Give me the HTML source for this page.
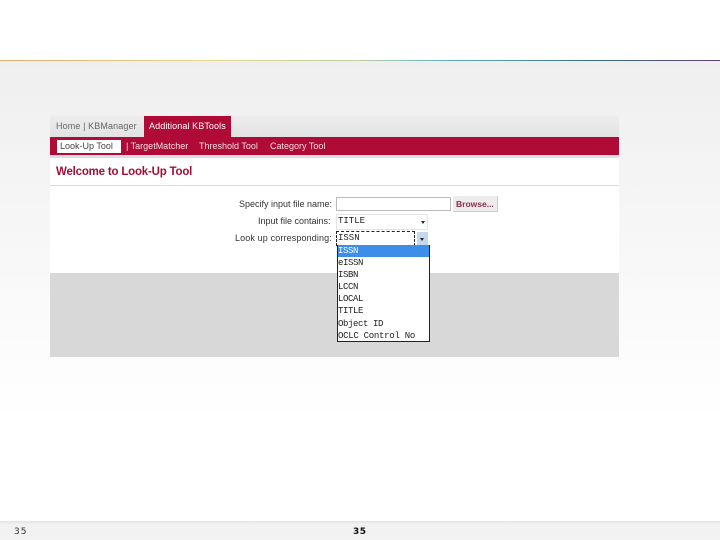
<!DOCTYPE html>
<html><head><meta charset="utf-8"><style>
html,body{margin:0;padding:0}
body{width:720px;height:540px;position:relative;overflow:hidden;background:#fff;font-family:"Liberation Sans",sans-serif}
div,span.t{position:absolute}
.t{white-space:nowrap;font-size:9px;line-height:12px;color:#444;filter:blur(.35px)}
.m{font-family:"Liberation Mono",monospace;font-size:9px;line-height:12px;color:#222;white-space:nowrap;position:absolute;left:338px;filter:blur(.3px)}
.l{letter-spacing:-.4px}
</style></head><body>
<div style="left:0;top:61px;width:720px;height:360px;background:linear-gradient(#efefef,#fff)"></div>
<div style="left:0;top:60px;width:720px;height:1px;background:linear-gradient(90deg,#e0b070,#e8d890 30%,#b8d0a0 50%,#60b0c8 62%,#3a7088 82%,#604070)"></div>
<div style="left:50px;top:115px;width:569px;height:22px;background:linear-gradient(#eee,#e2e2e2)"></div>
<div style="left:144px;top:116px;width:87px;height:21px;background:#b00a37"></div>
<div style="left:50px;top:137px;width:569px;height:18px;background:#b00a37"></div>
<div style="left:50px;top:155px;width:569px;height:3px;background:#ddd"></div>
<div style="left:50px;top:158px;width:569px;height:115px;background:#fff"></div>
<div style="left:50px;top:185px;width:569px;height:1px;background:#ddd"></div>
<div style="left:50px;top:273px;width:569px;height:84px;background:#d8d8d8"></div>
<div style="left:57px;top:140px;width:64px;height:13px;background:#fff"></div>
<span class="t" style="left:56px;top:120px;color:#666;letter-spacing:.12px">Home | KBManager</span>
<span class="t" style="left:149px;top:120px;color:#fff;letter-spacing:.1px">Additional KBTools</span>
<span class="t" style="left:60px;top:140px;color:#444">Look-Up Tool</span>
<span class="t" style="left:126px;top:140px;color:#f0dde2">| TargetMatcher</span>
<span class="t" style="left:199px;top:140px;color:#f0dde2">Threshold Tool</span>
<span class="t" style="left:270px;top:140px;color:#f0dde2">Category Tool</span>
<span class="t" style="left:56px;top:165px;font-size:11.5px;line-height:14px;font-weight:bold;color:#a01038;letter-spacing:-.2px">Welcome to Look-Up Tool</span>
<span class="t" style="left:239px;top:198px;color:#333">Specify input file name:</span>
<span class="t" style="left:258px;top:215px;color:#333">Input file contains:</span>
<span class="t" style="left:235px;top:232px;color:#333;letter-spacing:.13px">Look up corresponding:</span>
<div style="left:336px;top:197px;width:113px;height:12px;border:1px solid #bbb;background:#fff"></div>
<div style="left:453px;top:196px;width:44px;height:15px;background:#ececec;border-right:1px solid #ccc;border-bottom:1px solid #ccc"></div>
<span class="t" style="left:456px;top:198px;font-weight:bold;font-size:8.5px;color:#8c2a48">Browse...</span>
<div style="left:336px;top:214px;width:90px;height:14px;border:1px solid #e4e4e4;background:#fff"></div>
<span class="m" style="top:215px">TITLE</span>
<div style="left:421px;top:221px;border:2.5px solid transparent;border-top:3px solid #222;border-bottom:0"></div>
<div style="left:336px;top:231px;width:77px;height:13px;border:1px dashed #222;background:#fff"></div>
<span class="m" style="top:232px">ISSN</span>
<div style="left:417px;top:232px;width:11px;height:13px;background:#c4d8ee"></div>
<div style="left:420px;top:238px;border:2.5px solid transparent;border-top:3px solid #222;border-bottom:0"></div>
<div style="left:337px;top:245px;width:91px;height:96px;background:#fff;border-left:1px solid #222;border-right:1px solid #222;border-bottom:1px solid #222"></div>
<div style="left:338px;top:245px;width:91px;height:12px;background:#3d8ee8"></div>
<span class="m l" style="top:245px;color:#fff">ISSN</span>
<span class="m l" style="top:257px">eISSN</span>
<span class="m l" style="top:269px">ISBN</span>
<span class="m l" style="top:281px">LCCN</span>
<span class="m l" style="top:293px">LOCAL</span>
<span class="m l" style="top:305px">TITLE</span>
<span class="m l" style="top:318px">Object ID</span>
<span class="m" style="top:330px;letter-spacing:-.27px">OCLC Control No</span>
<div style="left:0;top:521px;width:720px;height:19px;background:linear-gradient(#e2e2e2,#f1f1f1 3px,#f3f3f3)"></div>
<span class="t" style="left:14px;top:526px;font-family:'DejaVu Sans',sans-serif;color:#333;letter-spacing:1px;filter:none">35</span>
<span class="t" style="left:353px;top:526px;font-family:'DejaVu Sans',sans-serif;font-weight:bold;color:#111;letter-spacing:.5px;filter:none">35</span>
</body></html>
